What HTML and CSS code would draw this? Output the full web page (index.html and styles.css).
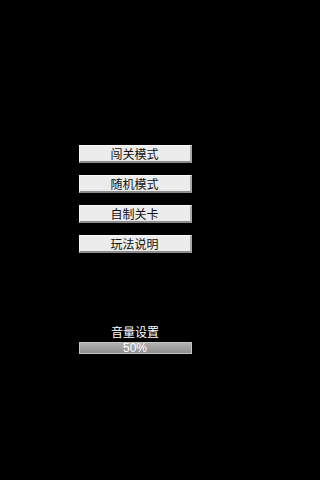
FILE: index.html
```html
<!DOCTYPE html>
<html>
<head>
<meta charset="utf-8">
<link rel="stylesheet" href="styles.css">
</head>
<body>
<div class="screen">
  <div class="menu">
    <div class="btn">闯关模式</div>
    <div class="btn">随机模式</div>
    <div class="btn">自制关卡</div>
    <div class="btn">玩法说明</div>
  </div>
  <div class="volume">
    <div class="vol-label">音量设置</div>
    <div class="vol-bar"><span class="vol-text">50%</span></div>
  </div>
</div>
</body>
</html>
```

FILE: styles.css
```css
html, body {
  margin: 0;
  padding: 0;
  background: #000;
}
.screen {
  width: 270px;
  height: 480px;
  display: flex;
  flex-direction: column;
  align-items: center;
  font-family: "Noto Sans CJK SC", "Noto Sans", sans-serif;
}
.menu {
  margin-top: 145px;
  display: flex;
  flex-direction: column;
  gap: 12px;
}
.btn {
  box-sizing: border-box;
  width: 113px;
  height: 18px;
  background: #ececec;
  border-top: 1px solid #fafafa;
  border-left: 1px solid #f4f4f4;
  border-right: 2px solid #a8a8a8;
  border-bottom: 2px solid #8c8c8c;
  color: #111;
  font-size: 12px;
  line-height: 15px;
  text-align: center;
}
.volume {
  margin-top: 71px;
  display: flex;
  flex-direction: column;
  align-items: center;
}
.vol-label {
  color: #fff;
  font-size: 12px;
  line-height: 16px;
}
.vol-bar {
  box-sizing: border-box;
  margin-top: 2px;
  width: 113px;
  height: 12px;
  background: linear-gradient(#b0b0b0, #8e8e8e);
  border: 1px solid #c4c4c4;
  display: flex;
  justify-content: center;
  align-items: center;
}
.vol-text {
  color: #fff;
  font-family: "Liberation Sans", Arial, sans-serif;
  font-size: 12px;
  line-height: 10px;
}
```
